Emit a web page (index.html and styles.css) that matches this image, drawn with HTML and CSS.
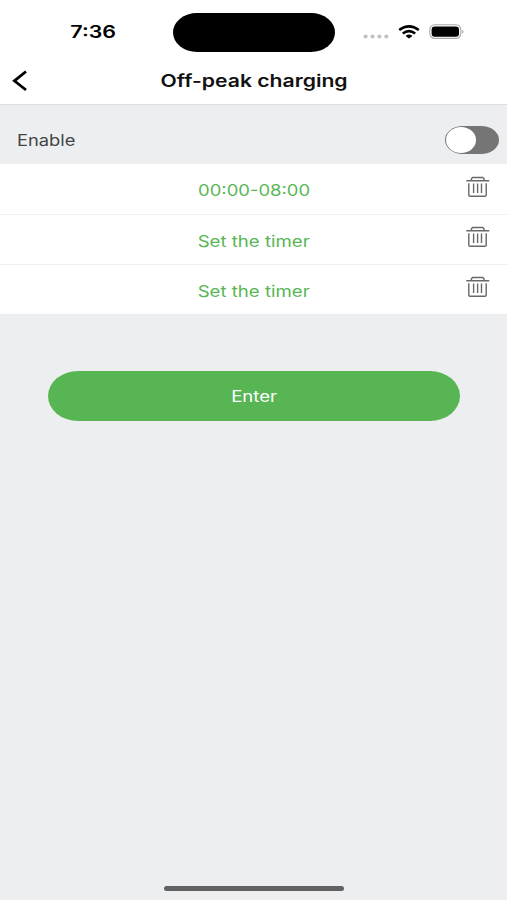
FILE: index.html
```html
<!DOCTYPE html>
<html lang="en">
<head>
<meta charset="utf-8">
<title>Off-peak charging</title>
<link rel="stylesheet" href="styles.css">
</head>
<body>
<svg class="symbols" aria-hidden="true">
  <symbol id="trash" viewBox="0 0 24 22">
    <path d="M0.3 4.7H23.3M5.4 4.7V2.8L6.6 1.5H16.8L18 2.8V4.7M2.8 7.3V19.2Q2.8 20.3 4 20.3H19Q20.2 20.3 20.2 19.2V7.3M7.6 7.6V17M11.6 7.6V17M15.5 7.6V17" fill="none" stroke="#686868" stroke-width="1.4"/>
  </symbol>
</svg>
<header class="header">
  <div class="status">
    <div class="time"><span class="wide">7:36</span></div>
    <div class="island"></div>
    <div class="indicators">
      <svg class="dots" viewBox="0 0 26 5"><g fill="#c2c2c2"><circle cx="2.6" cy="2.5" r="2.1"/><circle cx="9.5" cy="2.5" r="2.1"/><circle cx="16.4" cy="2.5" r="2.1"/><circle cx="23.3" cy="2.5" r="2.1"/></g></svg>
      <svg class="wifi" viewBox="0 0 22 14"><g fill="none" stroke="#000" stroke-width="2.5"><path d="M1.2 5Q11 -2.3 20.8 5"/><path d="M4.8 8.6Q11 3.7 17.2 8.6"/></g><path d="M7.6 11Q11 8.2 14.4 11L11 13.6Z"/></svg>
      <svg class="battery" viewBox="0 0 36 16"><rect x=".8" y=".8" width="31" height="13.6" rx="4.8" fill="#fff" stroke="#aaa" stroke-width="1.1"/><rect x="2.6" y="2.5" width="27.4" height="10.2" rx="3.2"/><path d="M33.4 5.5Q35.4 7.6 33.4 9.7Z" fill="#888"/></svg>
    </div>
  </div>
  <nav class="nav">
    <svg class="back" viewBox="0 0 16 22"><path d="M14 1.5L2.4 10.8L14 20" fill="none" stroke="#000" stroke-width="2.8"/></svg>
    <h1 class="title"><span class="wide">Off-peak charging</span></h1>
  </nav>
</header>
<main>
  <section class="enable">
    <span class="label wide">Enable</span>
    <div class="toggle"><div class="knob"></div></div>
  </section>
  <ul class="timers">
    <li class="timer"><span class="wide range">00:00-08:00</span><svg class="trash"><use href="#trash"/></svg></li>
    <li class="timer"><span class="wide">Set the timer</span><svg class="trash"><use href="#trash"/></svg></li>
    <li class="timer"><span class="wide">Set the timer</span><svg class="trash"><use href="#trash"/></svg></li>
  </ul>
  <button class="enter"><span class="wide">Enter</span></button>
</main>
<div class="home"></div>
</body>
</html>
```
FILE: styles.css
```css
* { box-sizing: border-box; }
body {
  margin: 0;
  height: 900px;
  display: flex;
  flex-direction: column;
  background: #edeef0;
  font-family: Inter, "Liberation Sans", sans-serif;
  font-size: 15.5px;
  color: #444;
}
.symbols { position: absolute; width: 0; height: 0; }
svg { display: block; flex: none; }
.wide { display: inline-block; transform: scaleX(1.2); white-space: nowrap; }
.header { height: 105px; background: #fff; border-bottom: 1px solid #dcddde; }
.status {
  height: 57px;
  padding-top: 7px;
  display: grid;
  grid-template-columns: 173px 162px 172px;
  align-items: center;
}
.time { padding-left: 13px; text-align: center; font-size: 17px; font-weight: 600; color: #000; }
.time .wide { transform: scaleX(1.26); }
.island { height: 39px; background: #000; border-radius: 24px / 19.5px; }
.indicators { display: flex; align-items: center; padding-left: 28px; }
.dots { width: 26px; height: 5px; margin-top: 9px; }
.wifi { width: 22px; height: 14px; margin-left: 9px; }
.battery { width: 36px; height: 16px; margin-left: 9px; }
.nav {
  height: 47px;
  display: grid;
  grid-template-columns: 40px 1fr 40px;
  align-items: center;
}
.back { width: 16px; height: 22px; margin-left: 12px; }
.title { margin: 0; padding-left: 1px; text-align: center; font-size: 17px; line-height: 24px; font-weight: 600; color: #111; }
.title .wide { transform: scaleX(1.245); }
.enable {
  height: 59px;
  padding: 11px 8px 0 17px;
  display: flex;
  align-items: center;
  justify-content: space-between;
}
.label { transform: scaleX(1.18); transform-origin: left; padding-top: 1px; }
.toggle { width: 54px; height: 28px; padding: 1px; background: #757575; border-radius: 18px / 14px; }
.knob { width: 30px; height: 26px; background: #fff; border-radius: 50%; }
.timers { margin: 0; padding: 0; list-style: none; background: #fff; }
.timer {
  height: 50px;
  display: grid;
  grid-template-columns: 60px 1fr 60px;
  align-items: center;
  justify-items: center;
  color: #59b655;
}
.timer + .timer { border-top: 1px solid #eeeff0; }
.timer .wide { grid-column: 2; padding-top: 3px; }
.timer .range { transform: scaleX(1.19); margin-left: 1px; }
.trash { width: 24px; height: 22px; margin: 0 0 4px 1px; }
.timer + .timer .trash { margin-bottom: 5px; }
.enter {
  display: block;
  width: 412px;
  height: 50px;
  margin: 57px 0 0 48px;
  padding: 0;
  border: 0;
  border-radius: 30px / 25px;
  background: #58b554;
  color: #fff;
  font: inherit;
}
.home { width: 180px; height: 5px; margin: auto auto 9px 164px; border-radius: 3px; background: #626263; }
```
